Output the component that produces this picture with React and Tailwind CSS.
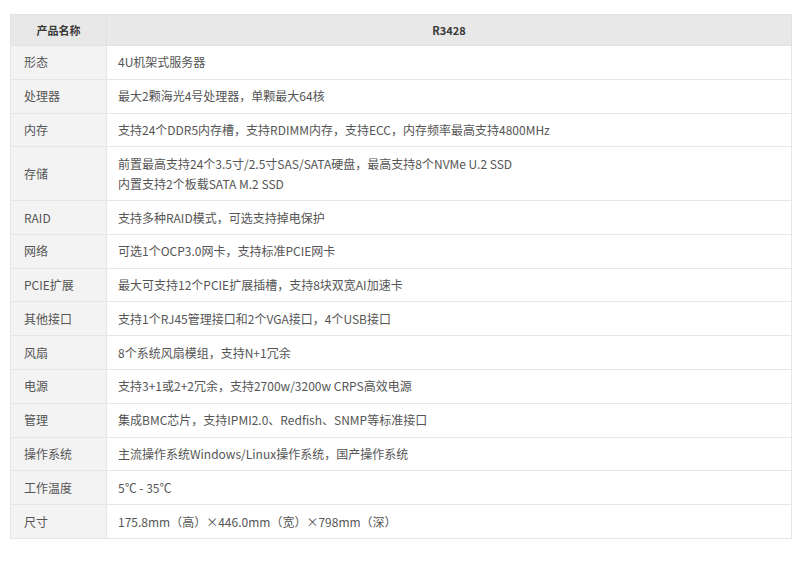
import React from "react";

const specs = [
  ["形态", ["4U机架式服务器"]],
  ["处理器", ["最大2颗海光4号处理器，单颗最大64核"]],
  ["内存", ["支持24个DDR5内存槽，支持RDIMM内存，支持ECC，内存频率最高支持4800MHz"]],
  [
    "存储",
    [
      "前置最高支持24个3.5寸/2.5寸SAS/SATA硬盘，最高支持8个NVMe U.2 SSD",
      "内置支持2个板载SATA M.2 SSD",
    ],
  ],
  ["RAID", ["支持多种RAID模式，可选支持掉电保护"]],
  ["网络", ["可选1个OCP3.0网卡，支持标准PCIE网卡"]],
  ["PCIE扩展", ["最大可支持12个PCIE扩展插槽，支持8块双宽AI加速卡"]],
  ["其他接口", ["支持1个RJ45管理接口和2个VGA接口，4个USB接口"]],
  ["风扇", ["8个系统风扇模组，支持N+1冗余"]],
  ["电源", ["支持3+1或2+2冗余，支持2700w/3200w CRPS高效电源"]],
  ["管理", ["集成BMC芯片，支持IPMI2.0、Redfish、SNMP等标准接口"]],
  ["操作系统", ["主流操作系统Windows/Linux操作系统，国产操作系统"]],
  ["工作温度", ["5℃ - 35℃"]],
  ["尺寸", ["175.8mm（高）×446.0mm（宽）×798mm（深）"]],
];

const App = () => {
  return (
    <div className="min-h-screen bg-white pt-[14px] pl-[10px] font-['Noto_Sans_CJK_SC',sans-serif] text-[12px] leading-[20px] text-[#555]">
      <table className="w-[782px] border-collapse border border-[#e6e6e6]">
        <thead>
          <tr className="bg-[#e8e8e8]">
            <th className="w-[96px] border border-[#e2e2e2] py-[5px] text-center text-[11px] font-bold text-[#3a3a3a]">
              产品名称
            </th>
            <th className="border border-[#e2e2e2] py-[5px] text-center text-[11px] font-bold text-[#3a3a3a]">
              R3428
            </th>
          </tr>
        </thead>
        <tbody>
          {specs.map(([label, lines]) => (
            <tr key={label}>
              <td className="border border-[#e6e6e6] bg-[#f3f3f3] py-[6.4px] pl-[13px] align-middle">
                {label}
              </td>
              <td className="border border-[#e6e6e6] py-[6.4px] pl-[11px] align-middle">
                {lines.map((line) => (
                  <div key={line}>{line}</div>
                ))}
              </td>
            </tr>
          ))}
        </tbody>
      </table>
    </div>
  );
};

export default App;
